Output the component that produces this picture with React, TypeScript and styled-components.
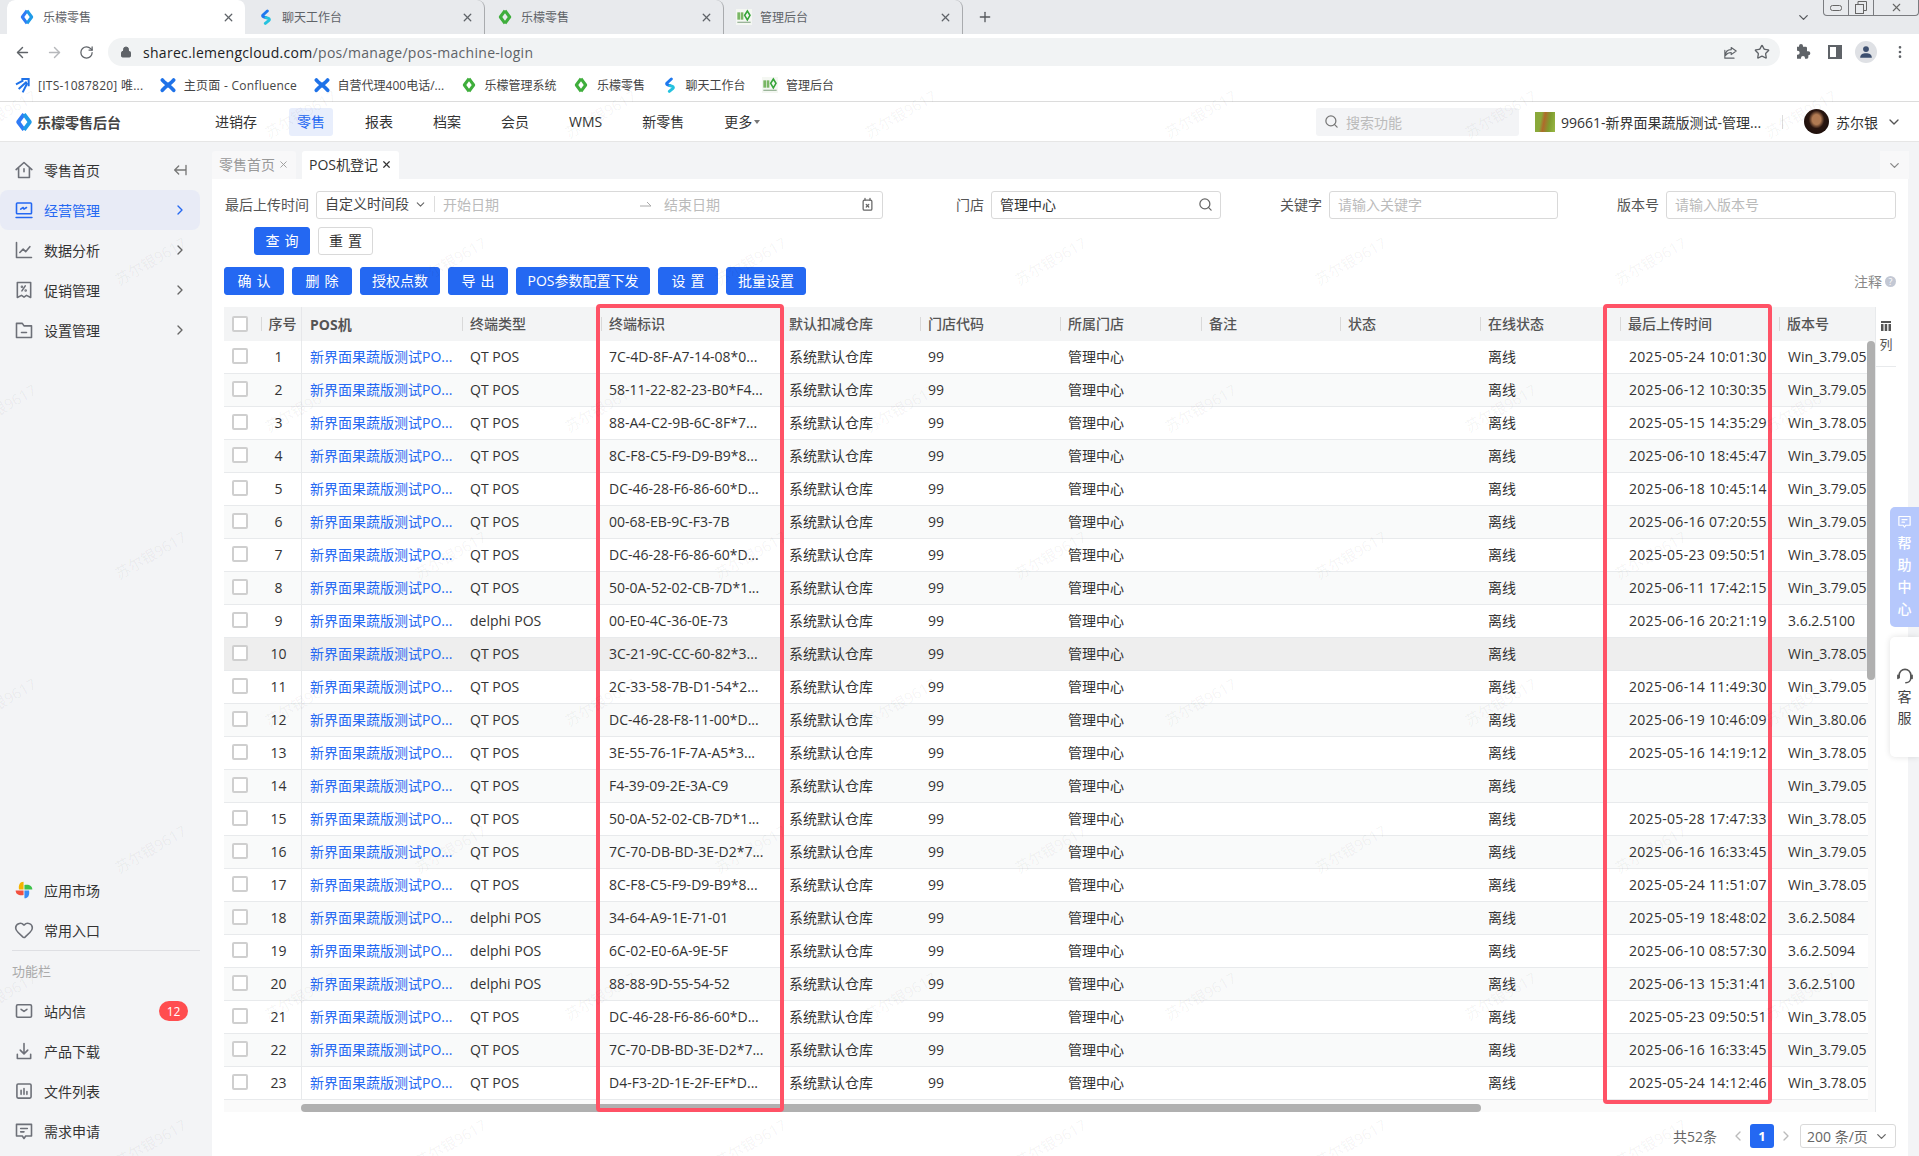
import React from 'react';
import styled, { createGlobalStyle } from 'styled-components';
import { ArrowLeft, ArrowRight, ChevronDown, ChevronLeft, ChevronRight, Heart, Lock, MoreVertical, Plus, RotateCw, Search, Star, X } from 'lucide-react';

const GlobalStyle = createGlobalStyle`
  html, body { margin: 0; padding: 0; height: 100%; overflow: hidden; background: #fff; }
  #root { height: 100%; }
  * { box-sizing: border-box; }
  body { font-family: "Open Sans", "Noto Sans CJK SC", sans-serif; font-size: 14px; color: #333; }
`;

const Page = styled.div`
  position: relative;
  width: 1919px;
  height: 1156px;
  display: flex;
  flex-direction: column;
  overflow: hidden;
`;

/* browser chrome */
const TabStrip = styled.div`
  height: 34px;
  background: #e8eaed;
  display: flex;
  padding-left: 7px;
  color: #5f6368;
  font-size: 12px;
`;
const BrowserTab = styled.div<{ $active?: boolean; $sep?: boolean }>`
  width: 239px;
  height: 34px;
  display: flex;
  align-items: center;
  gap: 8px;
  padding: 0 10px 0 12px;
  background: ${p => (p.$active ? '#fff' : 'transparent')};
  border-radius: 8px 8px 0 0;
  border-right: 1px solid ${p => (p.$sep ? '#a9abae' : 'transparent')};
  background-clip: padding-box;
`;
const TabTitle = styled.span`
  flex: 1;
  white-space: nowrap;
`;
const NewTab = styled.div`
  width: 44px;
  display: flex;
  align-items: center;
  justify-content: center;
  color: #55585c;
`;
const StripEnd = styled.div`
  margin-left: auto;
  display: flex;
  align-items: flex-start;
  color: #55585c;
`;
const ListTabs = styled.div`
  margin: 10px 12px 0 0;
`;
const WindowButtons = styled.div`
  display: flex;
  height: 16px;
  border: 1px solid #7a7c80;
  border-top: 0;
  border-radius: 0 0 4px 4px;
`;
const WindowButton = styled.div<{ $w: number; $last?: boolean }>`
  width: ${p => p.$w}px;
  display: flex;
  align-items: center;
  justify-content: center;
  border-right: ${p => (p.$last ? '0' : '1px solid #7a7c80')};
`;
const Toolbar = styled.div`
  height: 34px;
  background: #fff;
  display: flex;
  align-items: center;
  padding: 2px 1px 0 6px;
  color: #5f6368;
`;
const ToolButton = styled.div<{ $w?: number; $dim?: boolean }>`
  width: ${p => p.$w ?? 32}px;
  flex-shrink: 0;
  display: flex;
  justify-content: center;
  color: ${p => (p.$dim ? '#b6b8bb' : '#5f6368')};
`;
const AddressBar = styled.div`
  width: 1672px;
  height: 28px;
  margin-left: 6px;
  margin-right: 6px;
  background: #f1f3f4;
  border-radius: 14px;
  display: flex;
  align-items: center;
  padding: 0 10px 0 12px;
  gap: 11px;
  font-size: 14px;
  letter-spacing: 0.3px;
  color: #5f6368;
  flex-shrink: 0;
`;
const UrlHost = styled.span`
  color: #202124;
`;
const AddressEnd = styled.div`
  margin-left: auto;
  display: flex;
  align-items: center;
  gap: 15px;
`;
const ProfileDot = styled.div`
  width: 22px;
  height: 22px;
  border-radius: 50%;
  background: #dfe1e5;
  display: flex;
  align-items: center;
  justify-content: center;
`;
const Bookmarks = styled.div`
  height: 34px;
  background: #fff;
  border-bottom: 1px solid #dcdcdc;
  display: flex;
  align-items: center;
  gap: 16.5px;
  padding-left: 14px;
  font-size: 12px;
  color: #444;
`;
const Bookmark = styled.div<{ $latin?: boolean }>`
  display: flex;
  align-items: center;
  gap: 8px;
  white-space: nowrap;
  letter-spacing: ${p => (p.$latin ? '0.25px' : '0')};
`;

/* app header */
const AppHeader = styled.header`
  height: 40px;
  background: #fff;
  border-bottom: 1px solid #e6e6e6;
  display: flex;
  align-items: center;
  flex-shrink: 0;
`;
const Brand = styled.div`
  width: 207px;
  padding-left: 14px;
  display: flex;
  align-items: center;
  gap: 3px;
  font-weight: 700;
  font-size: 14px;
  color: #444;
`;
const TopNav = styled.nav`
  display: flex;
  gap: 24px;
`;
const TopNavItem = styled.div<{ $active?: boolean }>`
  height: 28px;
  line-height: 28px;
  padding: 0 8px;
  border-radius: 3px;
  background: ${p => (p.$active ? '#e8eefc' : 'transparent')};
  color: ${p => (p.$active ? '#2468f2' : '#333')};
  display: flex;
  align-items: center;
  gap: 2px;
`;
const MoreCaret = styled.span`
  width: 0;
  height: 0;
  border: 3.5px solid transparent;
  border-top: 4px solid #777;
  margin-top: 4px;
`;
const HeaderRight = styled.div`
  margin-left: auto;
  display: flex;
  align-items: center;
  padding-right: 17px;
`;
const SearchBox = styled.div`
  width: 203px;
  height: 28px;
  background: #f3f4f6;
  border-radius: 3px;
  display: flex;
  align-items: center;
  gap: 7px;
  padding-left: 8px;
  color: #bbb;
  font-size: 14px;
`;
const StoreThumb = styled.div`
  width: 20px;
  height: 20px;
  margin: 0 6px 0 16px;
  background: linear-gradient(100deg, #8aa93a 0 30%, #b06a2b 45%, #7f9d2f 70%, #9ab845);
`;
const StoreName = styled.span`
  width: 199px;
  white-space: nowrap;
  font-size: 14px;
`;
const HeaderDivider = styled.span`
  width: 1px;
  height: 14px;
  background: #ddd;
  margin: 0 21px 0 22px;
`;
const Avatar = styled.div`
  width: 25px;
  height: 25px;
  border-radius: 50%;
  margin-right: 7px;
  background: radial-gradient(ellipse at 50% 42%, #b07a52 0 24%, #2a1610 44%, #120a08 100%);
`;
const UserName = styled.span`
  width: 50px;
  font-size: 14px;
  color: #333;
  white-space: nowrap;
`;

/* sidebar */
const Body = styled.div`
  flex: 1;
  display: flex;
  min-height: 0;
`;
const Sidebar = styled.aside`
  width: 212px;
  background: #f3f4f6;
  display: flex;
  flex-direction: column;
  padding: 8px 12px 5px 0;
  flex-shrink: 0;
`;
const SideItem = styled.div<{ $active?: boolean }>`
  height: 40px;
  display: flex;
  align-items: center;
  gap: 10px;
  padding: 0 12px 0 14px;
  border-radius: 8px;
  font-size: 14px;
  background: ${p => (p.$active ? '#e8ebf6' : 'transparent')};
  color: ${p => (p.$active ? '#2468f2' : '#333')};
`;
const SideLabel = styled.span`
  flex: 1;
`;
const SideBottom = styled.div`
  margin-top: auto;
`;
const SideRule = styled.div`
  height: 1px;
  background: #dedfe3;
  margin: 0 0 0 12px;
`;
const SideCaption = styled.div`
  height: 40px;
  line-height: 41px;
  padding-left: 12px;
  font-size: 13px;
  color: #aaa;
`;
const Badge = styled.span`
  width: 29px;
  height: 20px;
  border-radius: 10px;
  background: #ff4d4f;
  color: #fff;
  font-size: 12px;
  display: flex;
  align-items: center;
  justify-content: center;
`;

/* main area */
const Main = styled.main`
  flex: 1;
  min-width: 0;
  display: flex;
  flex-direction: column;
  background: #f3f4f6;
`;
const PageTabs = styled.div`
  height: 37px;
  padding-top: 9px;
  display: flex;
  gap: 6px;
  flex-shrink: 0;
`;
const PageTab = styled.div<{ $active?: boolean }>`
  height: 28px;
  padding: 0 7px 2px;
  display: flex;
  align-items: center;
  gap: 3px;
  border-radius: 3px 3px 0 0;
  font-size: 14px;
  white-space: nowrap;
  background: ${p => (p.$active ? '#fff' : '#f8f8f9')};
  color: ${p => (p.$active ? '#333' : '#999')};
`;
const TabsMenu = styled.div`
  width: 29px;
  height: 28px;
  margin-left: auto;
  margin-right: 10px;
  background: #f8f8f9;
  display: flex;
  align-items: center;
  justify-content: center;
  color: #888;
`;
const Content = styled.div`
  flex: 1;
  margin-right: 11px;
  background: #fff;
  padding: 12px 12px 0;
`;
const FilterGrid = styled.div`
  display: grid;
  grid-template-columns: 659px 338px 337px 338px;
`;
const Field = styled.div`
  display: flex;
  justify-content: flex-end;
  align-items: center;
  gap: 7px;
  height: 28px;
`;
const FieldLabel = styled.label`
  white-space: nowrap;
  color: #555;
  font-size: 14px;
  padding-bottom: 2px;
`;
const Input = styled.div<{ $w: number; $dark?: boolean }>`
  width: ${p => p.$w}px;
  height: 28px;
  border: 1px solid #d9d9d9;
  border-radius: 3px;
  display: flex;
  align-items: center;
  justify-content: space-between;
  padding: 0 7px 2px 8px;
  color: ${p => (p.$dark ? '#333' : '#bbb')};
  white-space: nowrap;
`;
const RangeSelect = styled.span`
  width: 110px;
  display: flex;
  align-items: center;
  justify-content: space-between;
  gap: 2px;
  color: #444;
  padding-right: 7px;
  border-right: 1px solid #ddd;
  line-height: 16px;
`;
const RangeText = styled.span<{ $w: number }>`
  width: ${p => p.$w}px;
  margin-left: 8px;
`;
const RangeArrow = styled.span`
  display: flex;
  margin-right: 5px;
`;
const ButtonRow = styled.div<{ $pad?: number }>`
  display: flex;
  gap: 8px;
  margin-top: 8px;
  padding-left: ${p => p.$pad ?? 0}px;
`;
const ActionRow = styled.div`
  display: flex;
  align-items: center;
  gap: 8px;
  margin-top: 12px;
`;
const Btn = styled.button<{ $plain?: boolean; $spaced?: boolean; $w?: number }>`
  height: 28px;
  min-width: ${p => p.$w ?? 0}px;
  padding: ${p => (p.$spaced ? '0 0 2px 5px' : '0 10px 2px')};
  border: 1px solid ${p => (p.$plain ? '#d9d9d9' : '#2468f2')};
  border-radius: 3px;
  background: ${p => (p.$plain ? '#fff' : '#2468f2')};
  color: ${p => (p.$plain ? '#333' : '#fff')};
  font: inherit;
  font-size: 14px;
  white-space: nowrap;
  letter-spacing: ${p => (p.$spaced ? '5px' : '0')};
`;
const Hint = styled.div`
  margin-left: auto;
  display: flex;
  align-items: center;
  gap: 3px;
  color: #888;
  font-size: 14px;
`;
const HintDot = styled.span`
  width: 11px;
  height: 11px;
  border-radius: 50%;
  background: #c3c8d4;
  color: #fff;
  font-size: 9px;
  line-height: 11px;
  text-align: center;
`;

/* table */
const COLS = '32px 45px 161px 139px 180px 139px 140px 141px 139px 140px 140px 159px 89px';

const TableFrame = styled.div`
  position: relative;
  margin-top: 12px;
  height: 805px;
  display: flex;
`;
const TableMain = styled.div`
  width: 1651px;
  background: #fafafa;
`;
const HeadRow = styled.div`
  display: grid;
  grid-template-columns: ${COLS};
  width: 1651px;
  height: 34px;
  background: #f3f4f5;
`;
const HeadCell = styled.div<{ $strong?: boolean; $center?: boolean; $rule?: boolean }>`
  display: flex;
  align-items: center;
  justify-content: ${p => (p.$center ? 'center' : 'flex-start')};
  padding-left: ${p => (p.$center ? 0 : p.$strong ? 8 : 0)}px;
  border-left: ${p => (p.$rule ? '1px solid #e6e7ea' : '0')};
  font-weight: ${p => (p.$strong ? 700 : 500)};
  color: #555;
  font-size: 14px;
  white-space: nowrap;
`;
const HeadLabel = styled.span<{ $sep?: boolean }>`
  line-height: 14px;
  padding-left: ${p => (p.$sep ? 7 : 0)}px;
  border-left: ${p => (p.$sep ? '1px solid #d9d9d9' : '0')};
`;
const Row = styled.div<{ $bg: string }>`
  display: grid;
  grid-template-columns: ${COLS};
  width: 1644px;
  height: 33px;
  background: ${p => p.$bg};
  border-bottom: 1px solid #e8eaec;
  overflow: hidden;
`;
const Cell = styled.div<{ $center?: boolean; $link?: boolean; $rule?: boolean }>`
  display: flex;
  align-items: center;
  justify-content: ${p => (p.$center ? 'center' : 'flex-start')};
  padding: 0 0 2px ${p => (p.$center ? 0 : 8)}px;
  border-left: ${p => (p.$rule ? '1px solid #e8eaec' : '0')};
  color: ${p => (p.$link ? '#2468f2' : '#333')};
  white-space: nowrap;
  overflow: hidden;
`;
const Stamp = styled.span`
  letter-spacing: 0.3px;
  margin-left: 1px;
`;
const Version = styled.span`
  margin-left: 1px;
`;
const Check = styled.span`
  width: 16px;
  height: 16px;
  border: 2px solid #cfcfcf;
  border-radius: 2px;
  background: #fff;
`;
const ColumnTool = styled.div`
  width: 21px;
  height: 805px;
  border-left: 1px solid #e8eaec;
`;
const ColumnButton = styled.div`
  height: 60px;
  padding-top: 14px;
  display: flex;
  flex-direction: column;
  align-items: center;
  gap: 4px;
  border-bottom: 1px solid #e8eaec;
  font-size: 13px;
  line-height: 18px;
  color: #555;
`;
const ScrollX = styled.div`
  position: absolute;
  left: 77px;
  top: 797px;
  width: 1180px;
  height: 8px;
  border-radius: 4px;
  background: #b0b0b0;
`;
const ScrollY = styled.div`
  position: absolute;
  left: 1643px;
  top: 34px;
  width: 8px;
  height: 339px;
  border-radius: 4px;
  background: #b0b0b0;
`;
const Marker = styled.div<{ $x: number; $w: number; $h: number }>`
  position: absolute;
  left: ${p => p.$x}px;
  top: -3px;
  width: ${p => p.$w}px;
  height: ${p => p.$h}px;
  border: 4px solid #ff5266;
  border-radius: 4px;
  pointer-events: none;
`;
const Pager = styled.div`
  margin-top: 12px;
  height: 24px;
  display: flex;
  justify-content: flex-end;
  align-items: center;
  color: #666;
`;
const PagerTotal = styled.span`
  margin-right: 13px;
`;
const PageNo = styled.span`
  width: 24px;
  height: 24px;
  margin: 0 4px;
  border-radius: 3px;
  background: #2468f2;
  color: #fff;
  font-size: 13px;
  font-weight: 700;
  display: flex;
  align-items: center;
  justify-content: center;
`;
const PageSize = styled.div`
  width: 96px;
  height: 24px;
  margin-left: 6px;
  border: 1px solid #d9d9d9;
  border-radius: 3px;
  display: flex;
  align-items: center;
  justify-content: space-between;
  padding: 0 6px;
`;

/* floating bits */
const HelpTab = styled.div`
  position: absolute;
  right: 0;
  top: 507px;
  width: 29px;
  height: 120px;
  border-radius: 5px 0 0 5px;
  background: #b6c8fc;
  color: #fff;
  display: flex;
  flex-direction: column;
  align-items: center;
  padding-top: 7px;
  font-size: 14px;
  font-weight: 500;
  line-height: 22px;
`;
const HelpIcon = styled.span`
  display: flex;
  margin-bottom: 3px;
`;
const ServiceTab = styled.div`
  position: absolute;
  right: 0;
  top: 637px;
  width: 29px;
  height: 120px;
  border-radius: 5px 0 0 5px;
  background: #fff;
  box-shadow: 0 0 6px rgba(0, 0, 0, 0.12);
  color: #444;
  display: flex;
  flex-direction: column;
  align-items: center;
  justify-content: center;
  font-size: 14px;
  line-height: 21.5px;
`;
const Watermarks = styled.div`
  position: absolute;
  left: 0;
  top: 40px;
  width: 1919px;
  pointer-events: none;
  overflow: hidden;
  user-select: none;
`;
const MarkRow = styled.div<{ $shift: number }>`
  height: 147px;
  display: flex;
  margin-left: ${p => p.$shift}px;
`;
const Mark = styled.span`
  flex: 0 0 300px;
  height: 147px;
  display: flex;
  align-items: center;
  justify-content: center;
  font-size: 15px;
  color: rgba(0, 0, 0, 0.05);
  transform: rotate(-30deg);
  white-space: nowrap;
`;

/* drawn icons */
const Diamond = ({ color = '#2f7bf6', alt = '#1f9be8', size = 16 }: { color?: string; alt?: string; size?: number }) => (
  <svg width={size} height={size} viewBox="0 0 24 24" fill="none" strokeWidth="4.6" strokeLinejoin="round">
    <path d="M12 2.500 5 12l7 9.500" stroke={color} />
    <path d="M12 2.500 19 12l-7 9.500" stroke={alt} />
  </svg>
);
const ChatLogo = ({ size = 16 }: { size?: number }) => (
  <svg width={size} height={size} viewBox="0 0 24 24" fill="none" strokeWidth="4.4" strokeLinecap="round" strokeLinejoin="round">
    <path d="M14 3 7.500 9c-1 1-.5 2.400.8 2.800L12 13" stroke="#1f78ee" />
    <path d="m12 13 3.800 1.200c1.300.4 1.600 1.800.7 2.800L11 21.500" stroke="#25c2df" />
  </svg>
);
const LemonLogo = () => (
  <svg width="16" height="16" viewBox="0 0 24 24">
    <rect width="24" height="24" fill="#f4f7f2" />
    <rect x="2" y="5" width="4" height="11" fill="#7ab765" />
    <rect x="7" y="5" width="4" height="11" fill="#7ab765" />
    <path d="M17 3l4 6.500-4 7-4-7z" fill="none" stroke="#37a53a" strokeWidth="2.400" />
    <rect x="2" y="19" width="20" height="2" fill="#9bb59a" />
  </svg>
);
const Confluence = () => (
  <svg width="16" height="16" viewBox="0 0 24 24" fill="none" stroke="#1f72e8" strokeWidth="5.500" strokeLinecap="round">
    <path d="M3.500 4.500C8 9.500 10 11 12 11s4-1.500 8.500-6.500" />
    <path d="M3.500 20C8 15 10 13 12 13s4 2 8.500 7" />
  </svg>
);
const Jira = () => (
  <svg width="16" height="16" viewBox="0 0 24 24" fill="none" stroke="#1f72e8" strokeWidth="3">
    <path d="M3 11 14 5M7 18 19 7M13 23l7-14" />
    <path d="M11 3h11v11" />
  </svg>
);
const Line = ({ children, color = '#6d7078', size = 20, width = 1.9 }: { children: React.ReactNode; color?: string; size?: number; width?: number }) => (
  <svg width={size} height={size} viewBox="0 0 24 24" fill="none" stroke={color} strokeWidth={width} strokeLinecap="round" strokeLinejoin="round">
    {children}
  </svg>
);
const Pinwheel = () => (
  <svg width="20" height="20" viewBox="0 0 24 24">
    <path d="M11.500 11.500 V2 C7 2 5 6 6 11.500z" fill="#f5b400" />
    <path d="M12.500 11.500 H22 C22 7 18 5 12.500 6z" fill="#3ec24b" />
    <path d="M12.500 12.500 V22 C17 22 19 18 18 12.500z" fill="#3a8df5" />
    <path d="M11.500 12.500 H2 C2 17 6 19 11.500 18z" fill="#f2503f" />
  </svg>
);

const sideTop: { label: string; icon: React.ReactNode; active?: boolean }[] = [
  { label: '经营管理', active: true, icon: <Line color="#2468f2"><rect x="3" y="3.500" width="18" height="13" rx="1" /><path d="M2.500 21h19M8 11l3-2 1 2 3-2" /></Line> },
  { label: '数据分析', icon: <Line><path d="M3 3v18h18M7 15l4-4 3 3 5-6" /></Line> },
  { label: '促销管理', icon: <Line><path d="M4 3h16v18l-5-2.500-3 2-3-2-5 2.500z" /><path d="m9.500 13 4-6" /><circle cx="9.500" cy="8" r=".6" /><circle cx="14" cy="12.500" r=".6" /></Line> },
  { label: '设置管理', icon: <Line><path d="M3 4h7l2 3h9v14H3zM9 15h6" /></Line> },
];

const sideTools: { label: string; badge?: string; icon: React.ReactNode }[] = [
  { label: '站内信', badge: '12', icon: <Line><rect x="3" y="4.500" width="18" height="15" rx="1.500" /><path d="m8.500 10 3.500 2.500 3.500-2.500" /></Line> },
  { label: '产品下载', icon: <Line><path d="M12 3v12M7.500 11l4.500 4.500 4.500-4.500M4 16v5h16v-5" /></Line> },
  { label: '文件列表', icon: <Line><rect x="3.500" y="3.500" width="17" height="17" rx="1.500" /><path d="M8.500 11v5M12 9v7M15.500 12.500V16" /></Line> },
  { label: '需求申请', icon: <Line><path d="M3 4h18v14h-7l-2 3-2-3H3zM8 9h8M8 13h4" /></Line> },
];

const bookmarks: { label: string; icon: React.ReactNode; latin?: boolean }[] = [
  { label: '[ITS-1087820] 唯...', icon: <Jira />, latin: true },
  { label: '主页面 - Confluence', icon: <Confluence />, latin: true },
  { label: '自营代理400电话/...', icon: <Confluence /> },
  { label: '乐檬管理系统', icon: <Diamond color="#3fae3c" alt="#3fae3c" /> },
  { label: '乐檬零售', icon: <Diamond color="#3fae3c" alt="#3fae3c" /> },
  { label: '聊天工作台', icon: <ChatLogo /> },
  { label: '管理后台', icon: <LemonLogo /> },
];

const browserTabs: { title: string; icon: React.ReactNode; active?: boolean; sep?: boolean }[] = [
  { title: '乐檬零售', icon: <Diamond />, active: true },
  { title: '聊天工作台', icon: <ChatLogo />, sep: true },
  { title: '乐檬零售', icon: <Diamond color="#3fae3c" alt="#3fae3c" />, sep: true },
  { title: '管理后台', icon: <LemonLogo />, sep: true },
];

const headers = ['终端类型', '终端标识', '默认扣减仓库', '门店代码', '所属门店', '备注', '状态', '在线状态', '最后上传时间', '版本号'];

const rows: [string, string, string, string][] = [
  ['QT POS', '7C-4D-8F-A7-14-08*0...', '2025-05-24 10:01:30', 'Win_3.79.05'],
  ['QT POS', '58-11-22-82-23-B0*F4...', '2025-06-12 10:30:35', 'Win_3.79.05'],
  ['QT POS', '88-A4-C2-9B-6C-8F*7...', '2025-05-15 14:35:29', 'Win_3.78.05'],
  ['QT POS', '8C-F8-C5-F9-D9-B9*8...', '2025-06-10 18:45:47', 'Win_3.79.05'],
  ['QT POS', 'DC-46-28-F6-86-60*D...', '2025-06-18 10:45:14', 'Win_3.79.05'],
  ['QT POS', '00-68-EB-9C-F3-7B', '2025-06-16 07:20:55', 'Win_3.79.05'],
  ['QT POS', 'DC-46-28-F6-86-60*D...', '2025-05-23 09:50:51', 'Win_3.78.05'],
  ['QT POS', '50-0A-52-02-CB-7D*1...', '2025-06-11 17:42:15', 'Win_3.79.05'],
  ['delphi POS', '00-E0-4C-36-0E-73', '2025-06-16 20:21:19', '3.6.2.5100'],
  ['QT POS', '3C-21-9C-CC-60-82*3...', '', 'Win_3.78.05'],
  ['QT POS', '2C-33-58-7B-D1-54*2...', '2025-06-14 11:49:30', 'Win_3.79.05'],
  ['QT POS', 'DC-46-28-F8-11-00*D...', '2025-06-19 10:46:09', 'Win_3.80.06'],
  ['QT POS', '3E-55-76-1F-7A-A5*3...', '2025-05-16 14:19:12', 'Win_3.78.05'],
  ['QT POS', 'F4-39-09-2E-3A-C9', '', 'Win_3.79.05'],
  ['QT POS', '50-0A-52-02-CB-7D*1...', '2025-05-28 17:47:33', 'Win_3.78.05'],
  ['QT POS', '7C-70-DB-BD-3E-D2*7...', '2025-06-16 16:33:45', 'Win_3.79.05'],
  ['QT POS', '8C-F8-C5-F9-D9-B9*8...', '2025-05-24 11:51:07', 'Win_3.78.05'],
  ['delphi POS', '34-64-A9-1E-71-01', '2025-05-19 18:48:02', '3.6.2.5084'],
  ['delphi POS', '6C-02-E0-6A-9E-5F', '2025-06-10 08:57:30', '3.6.2.5094'],
  ['delphi POS', '88-88-9D-55-54-52', '2025-06-13 15:31:41', '3.6.2.5100'],
  ['QT POS', 'DC-46-28-F6-86-60*D...', '2025-05-23 09:50:51', 'Win_3.78.05'],
  ['QT POS', '7C-70-DB-BD-3E-D2*7...', '2025-06-16 16:33:45', 'Win_3.79.05'],
  ['QT POS', 'D4-F3-2D-1E-2F-EF*D...', '2025-05-24 14:12:46', 'Win_3.78.05'],
];

const rowColor = (i: number) => (i === 9 ? '#eeeeee' : i % 2 === 1 ? '#f9fafa' : '#ffffff');

const markRows = [-150, 0, -150, 0, -150, 0, -150, 0];

export default function App() {
  return (
    <Page>
      <GlobalStyle />
      <TabStrip>
        {browserTabs.map((t, i) => (
          <BrowserTab key={i} $active={t.active} $sep={t.sep}>
            {t.icon}
            <TabTitle>{t.title}</TabTitle>
            <X size={13} strokeWidth={2.4} />
          </BrowserTab>
        ))}
        <NewTab><Plus size={16} strokeWidth={2} /></NewTab>
        <StripEnd>
          <ListTabs><ChevronDown size={15} /></ListTabs>
          <WindowButtons>
            <WindowButton $w={25}><svg width="12" height="6"><rect x=".5" y=".5" width="11" height="5" rx="2" fill="none" stroke="#666" /></svg></WindowButton>
            <WindowButton $w={25}><svg width="12" height="13" fill="none" stroke="#666"><rect x=".5" y="3.500" width="8" height="9" /><path d="M3 3.500V.5h8.500v9H8.500" /></svg></WindowButton>
            <WindowButton $w={44} $last><X size={13} color="#666" /></WindowButton>
          </WindowButtons>
        </StripEnd>
      </TabStrip>
      <Toolbar>
        <ToolButton><ArrowLeft size={17} /></ToolButton>
        <ToolButton $dim><ArrowRight size={17} /></ToolButton>
        <ToolButton><RotateCw size={15} /></ToolButton>
        <AddressBar>
          <Lock size={12} fill="#5f6368" />
          <span><UrlHost>sharec.lemengcloud.com</UrlHost>/pos/manage/pos-machine-login</span>
          <AddressEnd>
            <Line size={17} color="#5f6368" width={1.6}><path d="M13 5l7 5-7 5v-3c-4 0-6 1-8 4 0-5 3-8 8-8zM4 9v11h13" /></Line>
            <Star size={16} />
          </AddressEnd>
        </AddressBar>
        <ToolButton $w={34}>
          <svg width="16" height="16" viewBox="0 0 24 24" fill="#5f6368"><path d="M20 11h-2V6a2 2 0 0 0-2-2h-4V3a3 3 0 0 0-6 0v1H3v6h1a3 3 0 0 1 0 6H3v6h6v-1a3 3 0 0 1 6 0v1h3a2 2 0 0 0 2-2v-3a3 3 0 0 0 0-6z" /></svg>
        </ToolButton>
        <ToolButton $w={30}>
          <svg width="14" height="14" viewBox="0 0 14 14"><rect width="14" height="14" fill="#5f6368" /><rect x="2" y="2" width="6" height="10" fill="#fff" /></svg>
        </ToolButton>
        <ToolButton $w={32}>
          <ProfileDot>
            <svg width="14" height="14" viewBox="0 0 24 24" fill="#3d4f6f"><circle cx="12" cy="7" r="5" /><path d="M2 22c0-6 4-8 10-8s10 2 10 8z" /></svg>
          </ProfileDot>
        </ToolButton>
        <ToolButton $w={36}><MoreVertical size={16} /></ToolButton>
      </Toolbar>
      <Bookmarks>
        {bookmarks.map(b => (
          <Bookmark key={b.label} $latin={b.latin}>{b.icon}<span>{b.label}</span></Bookmark>
        ))}
      </Bookmarks>
      <AppHeader>
        <Brand><Diamond size={20} /><span>乐檬零售后台</span></Brand>
        <TopNav>
          {['进销存', '零售', '报表', '档案', '会员', 'WMS', '新零售'].map(n => (
            <TopNavItem key={n} $active={n === '零售'}>{n}</TopNavItem>
          ))}
          <TopNavItem>更多<MoreCaret /></TopNavItem>
        </TopNav>
        <HeaderRight>
          <SearchBox><Search size={15} color="#777" /><span>搜索功能</span></SearchBox>
          <StoreThumb />
          <StoreName>99661-新界面果蔬版测试-管理...</StoreName>
          <HeaderDivider />
          <Avatar />
          <UserName>苏尔银</UserName>
          <ChevronDown size={16} color="#555" />
        </HeaderRight>
      </AppHeader>
      <Body>
        <Sidebar>
          <SideItem>
            <Line><path d="M2.500 11.500 12 3l9.500 8.500M5.500 9.500V21h13V9.500M12 10.500V14" /></Line>
            <SideLabel>零售首页</SideLabel>
            <Line size={16} color="#777" width={2}><path d="M20 12H5M10 6l-6 6 6 6M21 5v14" /></Line>
          </SideItem>
          {sideTop.map(s => (
            <SideItem key={s.label} $active={s.active}>
              {s.icon}
              <SideLabel>{s.label}</SideLabel>
              <ChevronRight size={16} color={s.active ? '#2468f2' : '#666'} />
            </SideItem>
          ))}
          <SideBottom>
            <SideItem><Pinwheel /><SideLabel>应用市场</SideLabel></SideItem>
            <SideItem><Heart size={20} color="#6d7078" strokeWidth={1.9} /><SideLabel>常用入口</SideLabel></SideItem>
            <SideRule />
            <SideCaption>功能栏</SideCaption>
            {sideTools.map(s => (
              <SideItem key={s.label}>
                {s.icon}
                <SideLabel>{s.label}</SideLabel>
                {s.badge && <Badge>{s.badge}</Badge>}
              </SideItem>
            ))}
          </SideBottom>
        </Sidebar>
        <Main>
          <PageTabs>
            <PageTab>零售首页<X size={11} /></PageTab>
            <PageTab $active>POS机登记<X size={11} color="#333" strokeWidth={2.6} /></PageTab>
            <TabsMenu><ChevronDown size={15} /></TabsMenu>
          </PageTabs>
          <Content>
            <FilterGrid>
              <Field>
                <FieldLabel>最后上传时间</FieldLabel>
                <Input $w={567}>
                  <RangeSelect>自定义时间段<ChevronDown size={13} color="#666" /></RangeSelect>
                  <RangeText $w={197}>开始日期</RangeText>
                  <RangeArrow>
                    <svg width="11" height="6" fill="none" stroke="#aaa"><path d="M0 5h11L7 1" /></svg>
                  </RangeArrow>
                  <RangeText $w={196}>结束日期</RangeText>
                  <Line size={15} color="#666" width={2}><rect x="5" y="5" width="14" height="16" rx="2" /><path d="M8 2v3M16 2v3M10 12l4 4M14 12l-4 4" /></Line>
                </Input>
              </Field>
              <Field>
                <FieldLabel>门店</FieldLabel>
                <Input $w={230} $dark>管理中心<Search size={15} color="#666" /></Input>
              </Field>
              <Field>
                <FieldLabel>关键字</FieldLabel>
                <Input $w={229}>请输入关键字</Input>
              </Field>
              <Field>
                <FieldLabel>版本号</FieldLabel>
                <Input $w={230}>请输入版本号</Input>
              </Field>
            </FilterGrid>
            <ButtonRow $pad={30}>
              <Btn $spaced $w={56}>查询</Btn>
              <Btn $plain $spaced $w={55}>重置</Btn>
            </ButtonRow>
            <ActionRow>
              <Btn $spaced $w={60}>确认</Btn>
              <Btn $spaced $w={60}>删除</Btn>
              <Btn $w={80}>授权点数</Btn>
              <Btn $spaced $w={60}>导出</Btn>
              <Btn $w={134}>POS参数配置下发</Btn>
              <Btn $spaced $w={60}>设置</Btn>
              <Btn $w={80}>批量设置</Btn>
              <Hint>注释<HintDot>?</HintDot></Hint>
            </ActionRow>
            <TableFrame>
              <TableMain>
                <HeadRow>
                  <HeadCell $center><Check /></HeadCell>
                  <HeadCell $center><HeadLabel $sep>序号</HeadLabel></HeadCell>
                  <HeadCell $strong $rule>POS机</HeadCell>
                  {headers.map(h => (
                    <HeadCell key={h}><HeadLabel $sep>{h}</HeadLabel></HeadCell>
                  ))}
                </HeadRow>
                {rows.map((r, i) => (
                  <Row key={i} $bg={rowColor(i)}>
                    <Cell $center><Check /></Cell>
                    <Cell $center>{i + 1}</Cell>
                    <Cell $link $rule>新界面果蔬版测试PO...</Cell>
                    <Cell>{r[0]}</Cell>
                    <Cell>{r[1]}</Cell>
                    <Cell>系统默认仓库</Cell>
                    <Cell>99</Cell>
                    <Cell>管理中心</Cell>
                    <Cell />
                    <Cell />
                    <Cell>离线</Cell>
                    <Cell><Stamp>{r[2]}</Stamp></Cell>
                    <Cell><Version>{r[3]}</Version></Cell>
                  </Row>
                ))}
              </TableMain>
              <ColumnTool>
                <ColumnButton>
                  <svg width="10" height="10" viewBox="0 0 10 10" fill="#555"><rect width="10" height="2" /><rect y="3" width="2.500" height="7" /><rect x="3.700" y="3" width="2.500" height="7" /><rect x="7.500" y="3" width="2.500" height="7" /></svg>
                  <span>列</span>
                </ColumnButton>
              </ColumnTool>
              <ScrollY />
              <ScrollX />
              <Marker $x={372} $w={188} $h={808} />
              <Marker $x={1379} $w={169} $h={800} />
            </TableFrame>
            <Pager>
              <PagerTotal>共52条</PagerTotal>
              <ChevronLeft size={16} color="#bbb" />
              <PageNo>1</PageNo>
              <ChevronRight size={16} color="#bbb" />
              <PageSize>200 条/页<ChevronDown size={15} color="#666" /></PageSize>
            </Pager>
          </Content>
        </Main>
      </Body>
      <HelpTab>
        <HelpIcon>
          <Line size={15} color="#fff"><path d="M3 4h18v14h-7l-2 3-2-3H3zM8 9h8M8 13h4" /></Line>
        </HelpIcon>
        <span>帮</span><span>助</span><span>中</span><span>心</span>
      </HelpTab>
      <ServiceTab>
        <Line size={20} color="#555"><path d="M5 14v-3a7 7 0 0 1 14 0v3c0 4-3 6-6 6M3.500 11v4M20.500 11v4" /></Line>
        <span>客</span><span>服</span>
      </ServiceTab>
      <Watermarks>
        {markRows.map((shift, i) => (
          <MarkRow key={i} $shift={shift}>
            {Array.from({ length: shift < 0 ? 7 : 6 }, (_, k) => <Mark key={k}>苏尔银9617</Mark>)}
          </MarkRow>
        ))}
      </Watermarks>
    </Page>
  );
}
